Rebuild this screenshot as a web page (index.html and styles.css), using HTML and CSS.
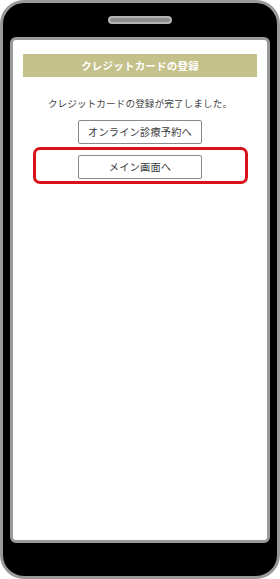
FILE: index.html
```html
<!DOCTYPE html>
<html lang="ja">
<head>
<meta charset="utf-8">
<link rel="stylesheet" href="styles.css">
</head>
<body>
<div class="phone">
  <div class="speaker"></div>
  <div class="screen">
    <div class="title">クレジットカードの登録</div>
    <p class="message">クレジットカードの登録が完了しました。</p>
    <div class="actions">
      <button class="btn">オンライン診療予約へ</button>
      <div class="highlight">
        <button class="btn">メイン画面へ</button>
      </div>
    </div>
  </div>
</div>
</body>
</html>
```

FILE: styles.css
```css
* { box-sizing: border-box; }
html, body { margin: 0; padding: 0; background: #fff; }
body { font-family: "Noto Sans CJK JP", "Noto Sans", sans-serif; }

.phone {
  width: 280px;
  height: 579px;
  border: 3px solid #9a9a9a;
  border-radius: 24px;
  background: #000;
  display: flex;
  flex-direction: column;
  align-items: center;
  padding: 13px 7px 0;
}

.speaker {
  width: 64px;
  height: 8px;
  border: 2px solid #b4b4b4;
  background: #8c8c8c;
  border-radius: 4px;
  margin-bottom: 13px;
}

.screen {
  width: 260px;
  height: 506px;
  border: 3px solid #9a9a9a;
  border-radius: 6px;
  background: #fff;
  padding: 14px 10px 0;
}

.title {
  height: 23px;
  background: #c4c18a;
  color: #fff;
  font-weight: bold;
  font-size: 10.5px;
  line-height: 23px;
  text-align: center;
  letter-spacing: 0.2px;
}

.message {
  margin: 19px 0 0;
  font-size: 9.6px;
  line-height: 14px;
  color: #444;
  text-align: center;
  letter-spacing: 0.1px;
}

.actions {
  display: flex;
  flex-direction: column;
  align-items: center;
  margin-top: 10px;
}

.btn {
  width: 124px;
  height: 24px;
  border: 1px solid #8a8a8a;
  border-radius: 2px;
  background: #fff;
  color: #3a3a3a;
  font-family: inherit;
  font-size: 10.2px;
  line-height: 22px;
  letter-spacing: 0.2px;
  padding: 0;
}

.highlight {
  margin-top: 3px;
  width: 215px;
  border: 3px solid #d8121a;
  border-radius: 7px;
  padding: 5px 0 2px;
  display: flex;
  justify-content: center;
}
```
